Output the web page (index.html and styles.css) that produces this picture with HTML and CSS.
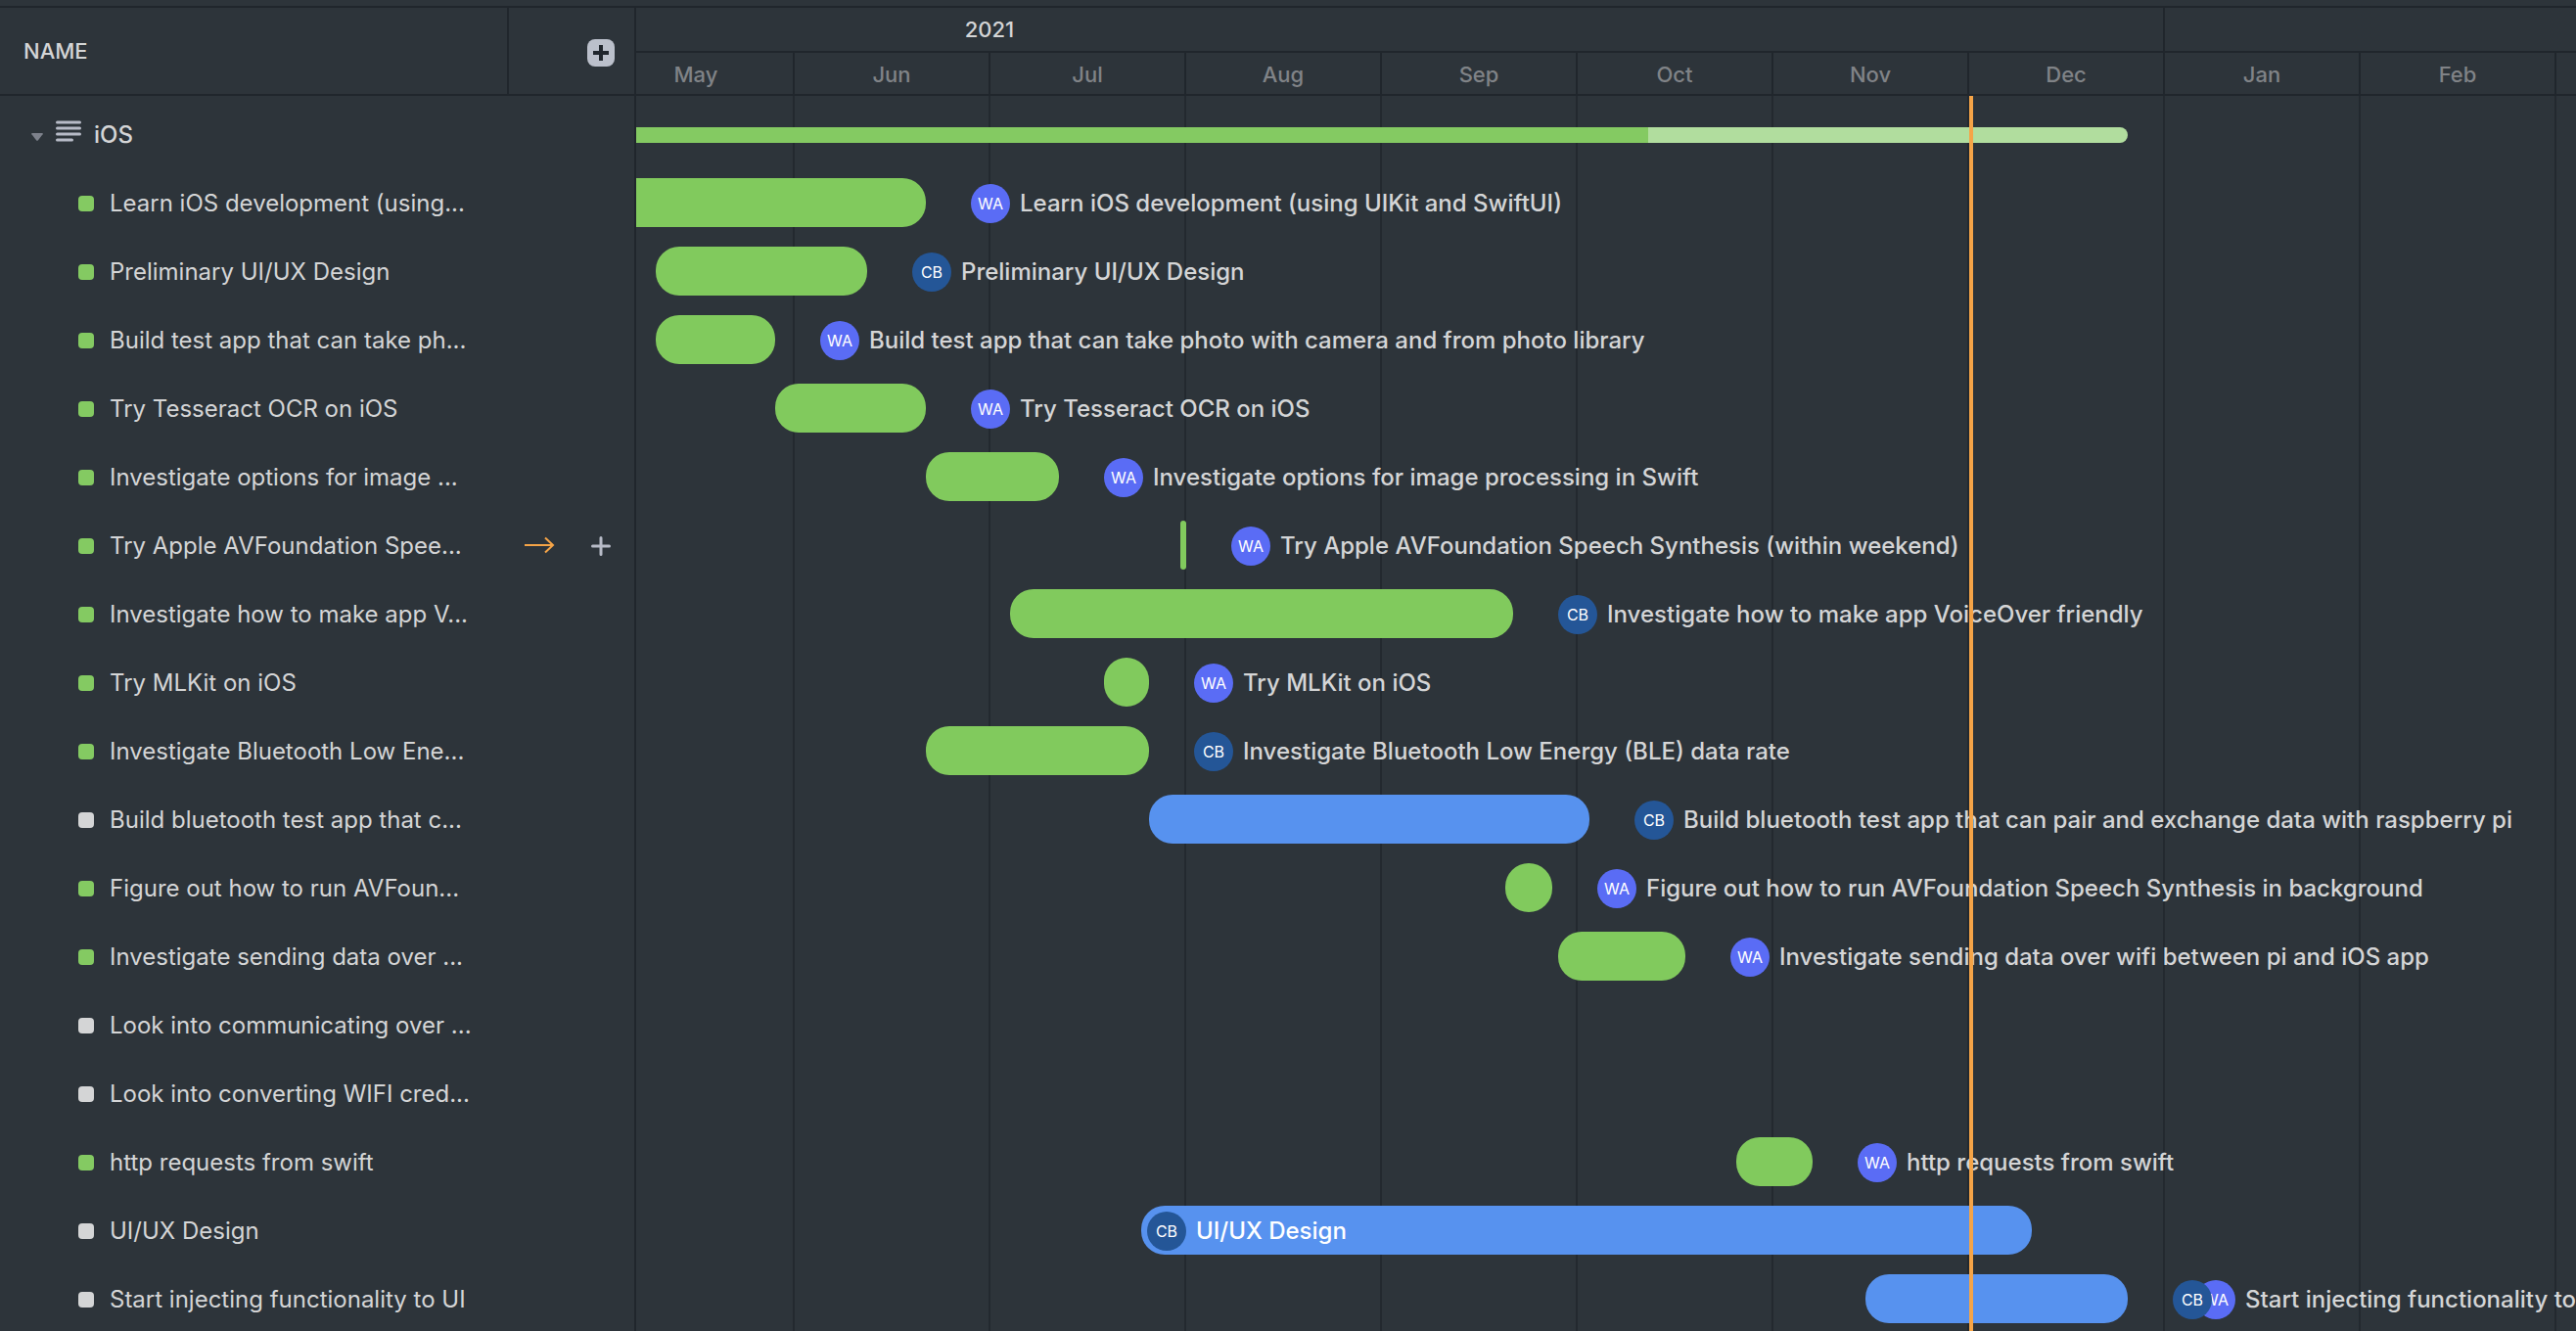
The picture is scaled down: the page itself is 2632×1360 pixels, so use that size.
FILE: index.html
```html
<!DOCTYPE html>
<html lang="en">
<head>
<meta charset="utf-8">
<title>iOS timeline</title>
<link rel="stylesheet" href="styles.css">
</head>
<body>
<main class="app">
  <section class="sidebar">
    <header class="sidebar-head">
      <h2 class="column-title">NAME</h2>
      <div class="column-actions">
        <button class="add-column" type="button" aria-label="Add column">
          <svg viewBox="0 0 28 28" width="28" height="28"><path d="M14 6v16M6 14h16" stroke="#20262d" stroke-width="4"/></svg>
        </button>
      </div>
    </header>
    <ul class="names">
      <li class="name-row group-row">
        <button class="toggle" type="button" aria-label="Collapse group">
          <svg viewBox="0 0 14 10" width="14" height="10"><path d="M2 1h10q1.500 0 .6 1.300L8 8.200q-1 1-2 0L1.400 2.300Q.5 1 2 1z" fill="#7d818b"/></svg>
        </button>
        <svg class="list-icon" viewBox="0 0 26 22" width="26" height="22"><path d="M1.500 2h23M1.500 8h23M1.500 14h23M1.500 20h15" stroke="#b7bbc7" stroke-width="3" stroke-linecap="round"/></svg>
        <span class="group-name">iOS</span>
      </li>
      <li class="name-row"><i class="dot done"></i><span class="name">Learn iOS development (using...</span></li>
      <li class="name-row"><i class="dot done"></i><span class="name">Preliminary UI/UX Design</span></li>
      <li class="name-row"><i class="dot done"></i><span class="name">Build test app that can take ph...</span></li>
      <li class="name-row"><i class="dot done"></i><span class="name">Try Tesseract OCR on iOS</span></li>
      <li class="name-row"><i class="dot done"></i><span class="name">Investigate options for image ...</span></li>
      <li class="name-row"><i class="dot done"></i><span class="name">Try Apple AVFoundation Spee...</span>
        <span class="row-actions">
          <button class="row-button" type="button" aria-label="Scroll to task">
            <svg viewBox="0 0 32 20" width="32" height="20"><path d="M1 9h29M22 1.500L30 9l-8 7.500" fill="none" stroke="#f5a447" stroke-width="2"/></svg>
          </button>
          <button class="row-button" type="button" aria-label="Add subtask">
            <svg viewBox="0 0 20 20" width="20" height="20"><path d="M10 1.500v17M1.500 10h17" stroke="#b7bbc7" stroke-width="3" stroke-linecap="round"/></svg>
          </button>
        </span>
      </li>
      <li class="name-row"><i class="dot done"></i><span class="name">Investigate how to make app V...</span></li>
      <li class="name-row"><i class="dot done"></i><span class="name">Try MLKit on iOS</span></li>
      <li class="name-row"><i class="dot done"></i><span class="name">Investigate Bluetooth Low Ene...</span></li>
      <li class="name-row"><i class="dot"></i><span class="name">Build bluetooth test app that c...</span></li>
      <li class="name-row"><i class="dot done"></i><span class="name">Figure out how to run AVFoun...</span></li>
      <li class="name-row"><i class="dot done"></i><span class="name">Investigate sending data over ...</span></li>
      <li class="name-row"><i class="dot"></i><span class="name">Look into communicating over ...</span></li>
      <li class="name-row"><i class="dot"></i><span class="name">Look into converting WIFI cred...</span></li>
      <li class="name-row"><i class="dot done"></i><span class="name">http requests from swift</span></li>
      <li class="name-row"><i class="dot"></i><span class="name">UI/UX Design</span></li>
      <li class="name-row"><i class="dot"></i><span class="name">Start injecting functionality to UI</span></li>
    </ul>
  </section>

  <section class="timeline">
    <div class="track">
      <header class="scale">
        <div class="years"><span class="year">2021</span></div>
        <div class="months">
          <span class="month first">May</span><span class="month">Jun</span><span class="month">Jul</span><span class="month">Aug</span><span class="month">Sep</span><span class="month">Oct</span><span class="month">Nov</span><span class="month">Dec</span><span class="month">Jan</span><span class="month">Feb</span><span class="month"></span>
        </div>
      </header>
      <ul class="chart">
        <li class="task summary"><span class="progress" style="--start:800px;--len:1072px"></span><span class="remaining" style="--len:490px"></span></li>
        <li class="task"><span class="bar done" style="--start:780px;--len:354px"></span><span class="tag"><b class="avatar wa">WA</b>Learn iOS development (using UIKit and SwiftUI)</span></li>
        <li class="task"><span class="bar done" style="--start:858px;--len:216px"></span><span class="tag"><b class="avatar cb">CB</b>Preliminary UI/UX Design</span></li>
        <li class="task"><span class="bar done" style="--start:858px;--len:122px"></span><span class="tag"><b class="avatar wa">WA</b>Build test app that can take photo with camera and from photo library</span></li>
        <li class="task"><span class="bar done" style="--start:980px;--len:154px"></span><span class="tag"><b class="avatar wa">WA</b>Try Tesseract OCR on iOS</span></li>
        <li class="task"><span class="bar done" style="--start:1134px;--len:136px"></span><span class="tag"><b class="avatar wa">WA</b>Investigate options for image processing in Swift</span></li>
        <li class="task"><span class="bar done thin" style="--start:1394px;--len:6px"></span><span class="tag"><b class="avatar wa">WA</b>Try Apple AVFoundation Speech Synthesis (within weekend)</span></li>
        <li class="task"><span class="bar done" style="--start:1220px;--len:514px"></span><span class="tag"><b class="avatar cb">CB</b>Investigate how to make app VoiceOver friendly</span></li>
        <li class="task"><span class="bar done" style="--start:1316px;--len:46px"></span><span class="tag"><b class="avatar wa">WA</b>Try MLKit on iOS</span></li>
        <li class="task"><span class="bar done" style="--start:1134px;--len:228px"></span><span class="tag"><b class="avatar cb">CB</b>Investigate Bluetooth Low Energy (BLE) data rate</span></li>
        <li class="task"><span class="bar" style="--start:1362px;--len:450px"></span><span class="tag"><b class="avatar cb">CB</b>Build bluetooth test app that can pair and exchange data with raspberry pi</span></li>
        <li class="task"><span class="bar done" style="--start:1726px;--len:48px"></span><span class="tag"><b class="avatar wa">WA</b>Figure out how to run AVFoundation Speech Synthesis in background</span></li>
        <li class="task"><span class="bar done" style="--start:1780px;--len:130px"></span><span class="tag"><b class="avatar wa">WA</b>Investigate sending data over wifi between pi and iOS app</span></li>
        <li class="task"></li>
        <li class="task"></li>
        <li class="task"><span class="bar done" style="--start:1962px;--len:78px"></span><span class="tag"><b class="avatar wa">WA</b>http requests from swift</span></li>
        <li class="task"><span class="bar" style="--start:1354px;--len:910px"><span class="tag inside"><b class="avatar cb">CB</b>UI/UX Design</span></span></li>
        <li class="task"><span class="bar" style="--start:2094px;--len:268px"></span><span class="tag"><span class="avatars"><b class="avatar cb">CB</b><b class="avatar wa">WA</b></span>Start injecting functionality to UI</span></li>
        <li class="today" style="--start:2200px" aria-label="Today"></li>
      </ul>
    </div>
  </section>
</main>
</body>
</html>
```

FILE: styles.css
```css
:root {
  --bg: #2d343a;
  --line: #20262c;
  --text: #d4d5d6;
  --green: #81ca5d;
  --blue: #5792ef;
  --month: 200px;
}

* { box-sizing: border-box; }

body {
  margin: 0;
  background: var(--bg);
  color: var(--text);
  font-family: Inter, "Liberation Sans", sans-serif;
  font-size: 24px;
  line-height: 32px;
}

ul { list-style: none; margin: 0; padding: 0; }

button {
  display: flex;
  padding: 0;
  border: 0;
  background: none;
  cursor: pointer;
}

.app {
  display: grid;
  grid-template-columns: 650px minmax(0, 1fr);
  height: 100vh;
  padding-top: 6px;
  overflow: hidden;
}

/* Names column */
.sidebar {
  border-top: 2px solid var(--line);
}

.sidebar-head {
  display: flex;
  height: 90px;
  border-bottom: 2px solid var(--line);
}

.column-title {
  flex: 1;
  margin: 0;
  padding-left: 24px;
  font-size: 22px;
  font-weight: 500;
  line-height: 88px;
}

.column-actions {
  display: flex;
  align-items: center;
  justify-content: flex-end;
  width: 132px;
  padding: 4px 20px 0 0;
  border: solid var(--line);
  border-width: 0 2px;
}

.add-column {
  border-radius: 8px;
  background: #bbc0cb;
}

.names {
  height: 100%;
  padding-top: 5px;
  border-right: 2px solid var(--line);
}

.name-row {
  display: flex;
  align-items: center;
  gap: 16px;
  height: 70px;
  padding: 0 24px 0 80px;
}

.group-row {
  gap: 13px;
  padding-left: 31px;
}

.toggle { padding-top: 4px; margin-right: -1px; }
.list-icon { margin-bottom: 8px; }
.group-name { font-weight: 500; }
.name { flex: 1; white-space: nowrap; }

.dot {
  width: 16px;
  height: 16px;
  border-radius: 4px;
  background: var(--text);
}

.dot.done { background: #84ca62; }

.row-actions {
  display: flex;
  align-items: center;
  gap: 37px;
}

/* Timeline */
.timeline {
  overflow: hidden;
  border-top: 2px solid var(--line);
}

.track {
  display: flex;
  flex-direction: column;
  width: 3600px;
  height: 100%;
  margin-left: -838px;
}

.scale { text-align: center; }

.years {
  height: 46px;
  border-bottom: 2px solid var(--line);
}

.year {
  display: block;
  width: 2400px;
  height: 44px;
  border-right: 2px solid var(--line);
  font-size: 22px;
  font-weight: 500;
  line-height: 44px;
}

.months {
  display: grid;
  grid-template-columns: repeat(18, var(--month));
  height: 44px;
  border-bottom: 2px solid var(--line);
}

.month {
  border-right: 2px solid var(--line);
  color: #808387;
  font-size: 22px;
  font-weight: 500;
  line-height: 44px;
}

.month.first { grid-column-start: 5; }

.chart {
  position: relative;
  flex: 1;
  padding-top: 5px;
  background: repeating-linear-gradient(to right, transparent 0 198px, #23292f 198px 200px);
}

.task {
  display: flex;
  align-items: center;
  height: 70px;
}

.bar {
  flex: none;
  width: var(--len);
  height: 50px;
  margin: 0 46px 2px var(--start);
  border-radius: 24px;
  background: var(--blue);
}

.bar.done { background: var(--green); }
.bar.thin { border-radius: 3px; }

.progress,
.remaining {
  width: var(--len);
  height: 16px;
}

.progress {
  margin-left: var(--start);
  background: #84ca62;
}

.remaining {
  border-radius: 0 8px 8px 0;
  background: #b1dd9e;
}

.tag {
  display: flex;
  align-items: center;
  gap: 10px;
  font-weight: 500;
  white-space: nowrap;
}

.tag.inside {
  height: 52px;
  padding-left: 6px;
  color: #fff;
}

.avatars { display: flex; }

.avatar {
  position: relative;
  width: 40px;
  height: 40px;
  border-radius: 50%;
  color: #fff;
  font-size: 16px;
  font-weight: 400;
  line-height: 40px;
  text-align: center;
}

.avatar.wa { background: #5a6cf5; }
.avatar.cb { background: #245697; }

.avatars .cb { z-index: 1; }
.avatars .wa { margin-left: -16px; }

.today {
  position: absolute;
  top: 0;
  bottom: 0;
  left: var(--start);
  width: 4px;
  background: #f5a447;
}
```
